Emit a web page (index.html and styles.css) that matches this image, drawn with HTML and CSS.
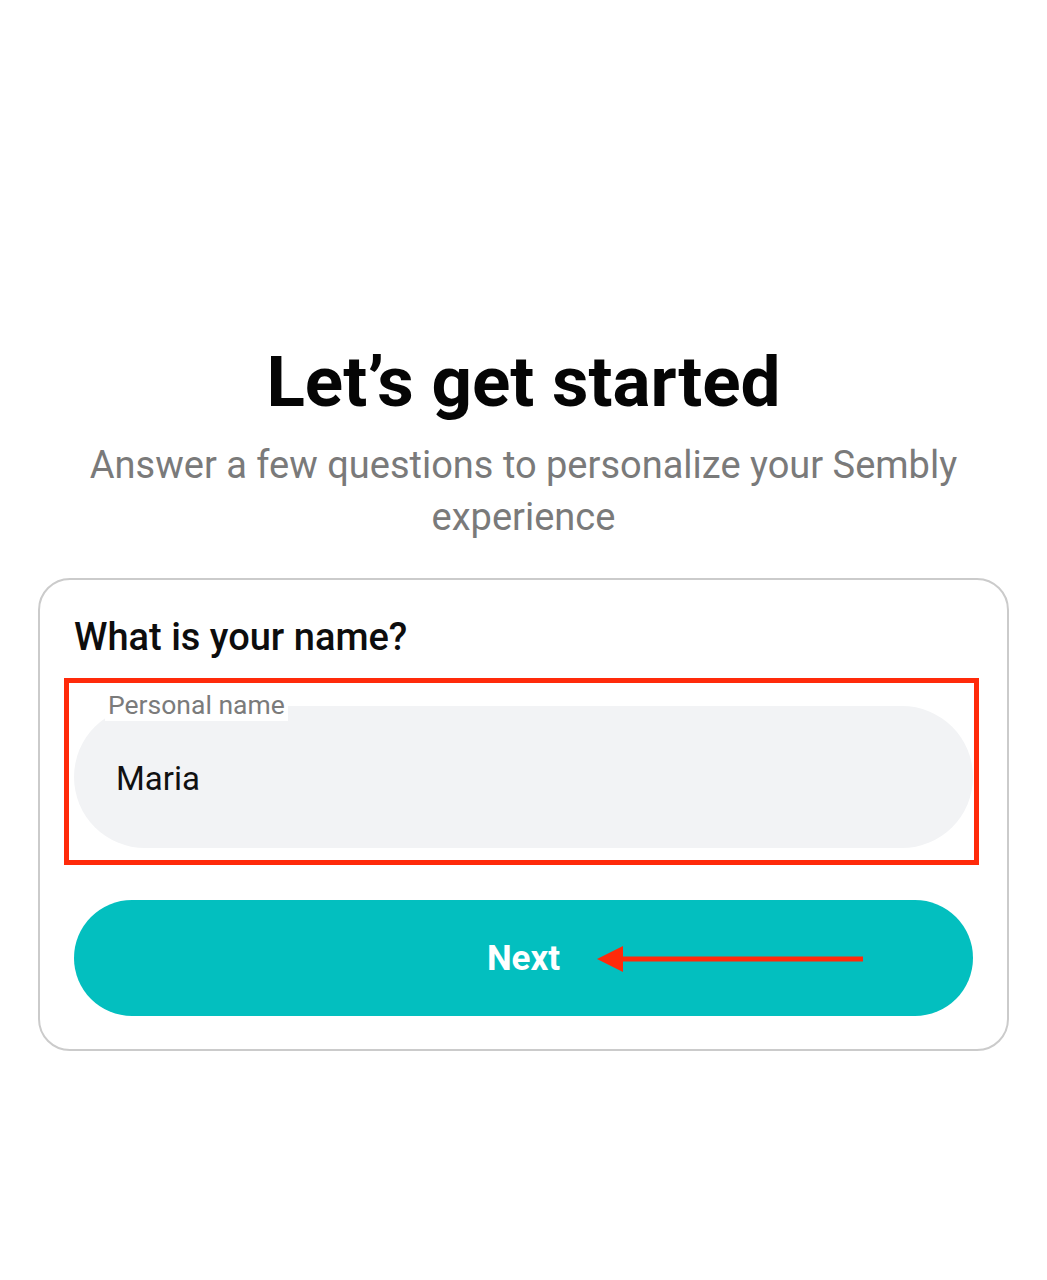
FILE: index.html
```html
<!DOCTYPE html>
<html lang="en">
<head>
<meta charset="utf-8">
<title>Let’s get started</title>
<link rel="stylesheet" href="styles.css">
</head>
<body>
<main class="onboarding">
  <h1 class="title">Let’s get started</h1>
  <p class="subtitle">Answer a few questions to personalize your Sembly experience</p>

  <section class="card">
    <h2 class="question">What is your name?</h2>

    <div class="field">
      <span class="field-label">Personal name</span>
      <span class="field-value">Maria</span>
      <span class="highlight-box"></span>
    </div>

    <button class="next-btn" type="button">
      Next
      <svg class="pointer-arrow" width="266" height="28" viewBox="0 0 266 28" aria-hidden="true">
        <path d="M0 14 L26 1 L26 27 Z" fill="#ff2a0a"/>
        <rect x="24" y="11.5" width="242" height="5" fill="#ff2a0a"/>
      </svg>
    </button>
  </section>
</main>
</body>
</html>
```

FILE: styles.css
```css
* {
  box-sizing: border-box;
}

html,
body {
  margin: 0;
  background: #ffffff;
}

body {
  font-family: Roboto, "Noto Sans", Arial, sans-serif;
  color: #111111;
}

.onboarding {
  display: flex;
  flex-direction: column;
  align-items: center;
  padding: 342px 38px 0;
}

.title {
  margin: 0;
  font-size: 71px;
  line-height: 80px;
  font-weight: 700;
  color: #050505;
  text-align: center;
  letter-spacing: 0;
}

.subtitle {
  margin: 17px 0 0;
  max-width: 940px;
  font-size: 38px;
  line-height: 52px;
  font-weight: 400;
  color: #7a7a7a;
  text-align: center;
}

.card {
  width: 971px;
  margin-top: 35px;
  padding: 34px 34px 33px;
  border: 2px solid #cbcbcb;
  border-radius: 32px;
  display: flex;
  flex-direction: column;
}

.question {
  margin: 0;
  font-size: 38px;
  line-height: 46px;
  font-weight: 500;
  color: #0d0d0d;
  padding-left: 0;
}

.field {
  position: relative;
  margin-top: 46px;
  height: 142px;
  border-radius: 71px;
  background: #f2f3f5;
  display: flex;
  align-items: center;
  padding-left: 42px;
  padding-top: 4px;
}

.field-label {
  position: absolute;
  top: -17px;
  left: 31px;
  padding: 0 3px;
  background: #ffffff;
  font-size: 26.5px;
  line-height: 32px;
  color: #7b7b7b;
}

.field-value {
  font-size: 33px;
  line-height: 40px;
  color: #111111;
}

/* red outline drawn around the name field */
.highlight-box {
  position: absolute;
  top: -28px;
  left: -10px;
  right: -6px;
  bottom: -17px;
  border: 5px solid #ff2a0a;
  pointer-events: none;
}

.next-btn {
  position: relative;
  margin-top: 52px;
  height: 116px;
  border: none;
  border-radius: 58px;
  background: #03bfbf;
  color: #ffffff;
  font-family: inherit;
  font-size: 35px;
  font-weight: 700;
  display: flex;
  align-items: center;
  justify-content: center;
  padding: 0;
}

.pointer-arrow {
  position: absolute;
  left: 523px;
  top: 45px;
}
```
